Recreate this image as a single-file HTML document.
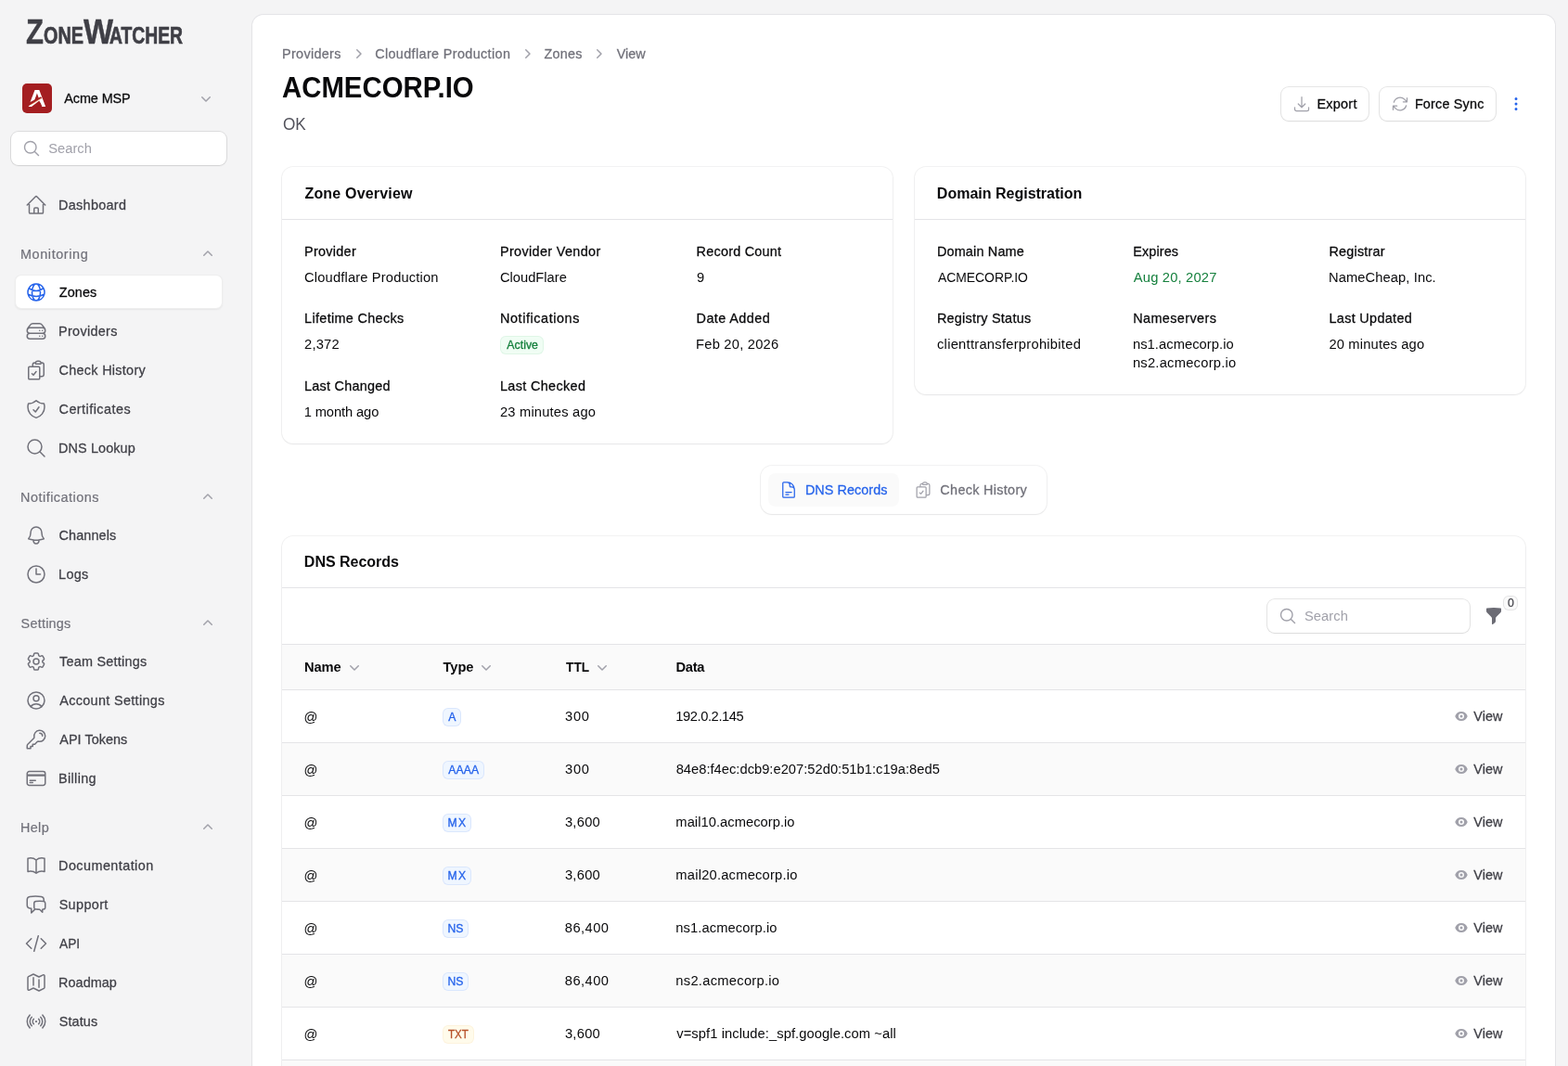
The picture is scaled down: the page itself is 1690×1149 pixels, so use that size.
<!DOCTYPE html>
<html lang="en">
<head>
<meta charset="utf-8">
<title>ACMECORP.IO - ZoneWatcher</title>
<style>
*{box-sizing:border-box;margin:0;padding:0}
html,body{width:1690px;height:1149px;overflow:hidden;background:#f4f4f5}
body{font-family:"Liberation Sans",sans-serif;font-size:14px;color:#09090b;position:relative}
svg{display:block}
.wrap{position:absolute;left:0;top:0;width:1690px;height:1149px;overflow:hidden;will-change:transform}
.t{position:absolute;white-space:nowrap}
.ic{position:absolute;fill:none;stroke-linecap:round;stroke-linejoin:round}
.im{position:absolute}
.sb{position:absolute;left:0;top:0;width:272px;height:1149px}
.logo{position:absolute;left:0;top:0;width:272px;height:60px;font-weight:700;color:#3f3f46}
.logo span{position:absolute;white-space:nowrap;transform-origin:0 0}
.tenant{position:absolute;left:24px;top:90px;width:32px;height:32px;border-radius:5px;background:#a41e21;overflow:hidden}
.ta{position:absolute;left:-.3px;top:2.2px;width:32px;text-align:center;font-weight:700;font-size:25px;line-height:28px;color:#fff;transform:scaleX(1.1)}
.inp{position:absolute;background:#fff;border-radius:8px;box-shadow:0 0 0 1px rgba(9,9,11,.1),0 1px 2px rgba(0,0,0,.05)}
.navon{position:absolute;left:16px;width:224px;height:37px;border-radius:7px;background:#fff;box-shadow:inset 0 0 0 1px rgba(9,9,11,.07),0 1px 2px rgba(0,0,0,.06)}
.main{position:absolute;left:272px;top:16px;width:1404px;height:1160px;background:#fff;border-radius:12px 12px 0 0;box-shadow:0 0 0 1px #e4e4e7}
.btn{position:absolute;background:#fff;border-radius:8px;box-shadow:0 0 0 1px rgba(9,9,11,.1),0 1px 2px rgba(0,0,0,.05)}
.card{position:absolute;background:#fff;border-radius:12px;box-shadow:0 0 0 1px rgba(9,9,11,.05),0 1px 2px rgba(0,0,0,.05)}
.card.tb{overflow:hidden}
.hr{position:absolute;left:0;right:0;height:1px;background:#e4e4e7}
.th{position:absolute;left:0;right:0;background:#fafafa}
.tabs{position:absolute;background:#fff;border-radius:12px;box-shadow:0 0 0 1px rgba(9,9,11,.05),0 1px 2px rgba(0,0,0,.05)}
.tabon{position:absolute;left:8px;top:8px;width:141px;height:36px;border-radius:8px;background:#fafafa}
.bdg{position:absolute;border-radius:6px}
.bdg.g{background:#f0fdf4;box-shadow:inset 0 0 0 1px rgba(22,163,74,.08)}
.bdg.b{background:#eff6ff;box-shadow:inset 0 0 0 1px rgba(37,99,235,.1)}
.bdg.o{background:#fffbeb;box-shadow:inset 0 0 0 1px rgba(217,119,6,.06)}
.bdg.z{background:#fafafa;box-shadow:inset 0 0 0 1px rgba(82,82,91,.12)}
</style>
</head>
<body>
<div class="wrap">
<aside class="sb">
<div class="logo"><span style="left:28.15px;top:14px;font-size:36px;line-height:41px;transform:scaleX(0.863);-webkit-text-stroke:0.4px #3f3f46">Z</span><span style="left:46.76px;top:24px;font-size:25.4px;line-height:28px;transform:scaleX(0.780);-webkit-text-stroke:0.7px #3f3f46">ONE</span><span style="left:89.71px;top:14px;font-size:36px;line-height:41px;transform:scaleX(0.943);-webkit-text-stroke:0.4px #3f3f46">W</span><span style="left:118.19px;top:24px;font-size:25.4px;line-height:28px;transform:scaleX(0.761);-webkit-text-stroke:0.7px #3f3f46">ATCHER</span></div>
<div class="tenant"><span class="ta">A</span><svg viewBox="0 0 32 32" style="position:absolute;left:0;top:0;width:32px;height:32px"><path d="M15.75 13.2 L10 24.8 L21.3 24.8 Z" fill="#a41e21"/><path d="M3 22.8 L20 14.2 L21.2 15.9 L3 26.4 Z" fill="#a41e21"/><path d="M6.8 24.6 L10.6 24.6 L20.7 16.8 L20.1 16.1 Z" fill="#fff"/><path d="M8.5 23.3 L20.2 16.3" stroke="#e9863a" stroke-width=".45" fill="none"/></svg></div>
<div class="t" style="left:69.25px;top:96.10px;font-size:14.399999999999999px;line-height:20px;color:#09090b;letter-spacing:-0.08px;-webkit-text-stroke:0.27px #09090b;">Acme MSP</div>
<svg class="im" style="left:212px;top:96px;width:20px;height:20px;fill:#a1a1aa" viewBox="0 0 20 20"><path fill-rule="evenodd" clip-rule="evenodd" d="M5.22 8.22a.75.75 0 0 1 1.06 0L10 11.94l3.72-3.72a.75.75 0 1 1 1.06 1.06l-4.25 4.25a.75.75 0 0 1-1.06 0L5.22 9.28a.75.75 0 0 1 0-1.06Z"/></svg>
<div class="inp" style="left:12px;top:142px;width:232px;height:36px"></div>
<svg class="ic " style="left:24px;top:150px;width:20px;height:20px;stroke:#a1a1aa;stroke-width:1.7" viewBox="0 0 24 24"><path d="M21 21l-5.197-5.197m0 0A7.5 7.5 0 105.196 5.196a7.5 7.5 0 0010.607 10.607z"/></svg>
<div class="t" style="left:52.25px;top:150.10px;font-size:14.7px;line-height:20px;color:#a1a1aa;letter-spacing:0.02px;">Search</div>
<svg class="ic " style="left:27px;top:209px;width:24px;height:24px;stroke:#71717a;stroke-width:1.5" viewBox="0 0 24 24"><path d="M2.25 12l8.954-8.955c.44-.439 1.152-.439 1.591 0L21.75 12M4.5 9.75v10.125c0 .621.504 1.125 1.125 1.125H9.75v-4.875c0-.621.504-1.125 1.125-1.125h2.25c.621 0 1.125.504 1.125 1.125V21h4.125c.621 0 1.125-.504 1.125-1.125V9.75M8.25 21h8.25"/></svg>
<div class="t" style="left:63.10px;top:211.10px;font-size:14.399999999999999px;line-height:20px;color:#3f3f46;letter-spacing:0.31px;-webkit-text-stroke:0.27px #3f3f46;">Dashboard</div>
<div class="navon" style="top:296px"></div>
<svg class="ic " style="left:27px;top:303px;width:24px;height:24px;stroke:#2563eb;stroke-width:1.5" viewBox="0 0 24 24"><path d="M12 21a9.004 9.004 0 008.716-6.747M12 21a9.004 9.004 0 01-8.716-6.747M12 21c2.485 0 4.5-4.03 4.5-9S14.485 3 12 3m0 18c-2.485 0-4.5-4.03-4.5-9S9.515 3 12 3m0 0a8.997 8.997 0 017.843 4.582M12 3a8.997 8.997 0 00-7.843 4.582m15.686 0A11.953 11.953 0 0112 10.5c-2.998 0-5.74-1.1-7.843-2.918m15.686 0A8.959 8.959 0 0121 12c0 .778-.099 1.533-.284 2.253m0 0A17.919 17.919 0 0112 16.5c-3.162 0-6.133-.815-8.716-2.247m0 0A9.015 9.015 0 013 12c0-1.605.42-3.113 1.157-4.418"/></svg>
<div class="t" style="left:63.85px;top:305.10px;font-size:14.399999999999999px;line-height:20px;color:#09090b;letter-spacing:0.08px;-webkit-text-stroke:0.27px #09090b;">Zones</div>
<svg class="ic " style="left:27px;top:345px;width:24px;height:24px;stroke:#71717a;stroke-width:1.5" viewBox="0 0 24 24"><path d="M5.25 14.25h13.5m-13.5 0a3 3 0 01-3-3m3 3a3 3 0 100 6h13.5a3 3 0 100-6m-16.5-3a3 3 0 013-3h13.5a3 3 0 013 3m-19.5 0a4.5 4.5 0 01.9-2.7L5.737 5.1a3.375 3.375 0 012.7-1.35h7.126c1.062 0 2.062.5 2.7 1.35l2.587 3.45a4.5 4.5 0 01.9 2.7m0 0a3 3 0 01-3 3m0 3h.008v.008h-.008v-.008zm0-6h.008v.008h-.008v-.008zm-3 6h.008v.008h-.008v-.008zm0-6h.008v.008h-.008v-.008z"/></svg>
<div class="t" style="left:63.10px;top:347.10px;font-size:14.399999999999999px;line-height:20px;color:#3f3f46;letter-spacing:0.31px;-webkit-text-stroke:0.27px #3f3f46;">Providers</div>
<svg class="ic " style="left:27px;top:387px;width:24px;height:24px;stroke:#71717a;stroke-width:1.5" viewBox="0 0 24 24"><path d="M11.35 3.836c-.065.21-.1.433-.1.664 0 .414.336.75.75.75h4.5a.75.75 0 00.75-.75 2.25 2.25 0 00-.1-.664m-5.8 0A2.251 2.251 0 0113.5 2.25H15c1.012 0 1.867.668 2.15 1.586m-5.8 0c-.376.023-.75.05-1.124.08C9.095 4.01 8.25 4.973 8.25 6.108V8.25m8.9-4.414c.376.023.75.05 1.124.08 1.131.094 1.976 1.057 1.976 2.192V16.5A2.25 2.25 0 0118 18.75h-2.25m-7.5-10.5H4.875c-.621 0-1.125.504-1.125 1.125v11.25c0 .621.504 1.125 1.125 1.125h9.75c.621 0 1.125-.504 1.125-1.125V18.75m-7.5-10.5h6.375c.621 0 1.125.504 1.125 1.125v9.375m-8.25-3l1.5 1.5 3-3.75"/></svg>
<div class="t" style="left:63.55px;top:389.10px;font-size:14.399999999999999px;line-height:20px;color:#3f3f46;letter-spacing:0.3px;-webkit-text-stroke:0.27px #3f3f46;">Check History</div>
<svg class="ic " style="left:27px;top:429px;width:24px;height:24px;stroke:#71717a;stroke-width:1.5" viewBox="0 0 24 24"><path d="M9 12.75L11.25 15 15 9.75m-3-7.036A11.959 11.959 0 013.598 6 11.99 11.99 0 003 9.749c0 5.592 3.824 10.29 9 11.623 5.176-1.332 9-6.03 9-11.622 0-1.31-.21-2.571-.598-3.751h-.152c-3.196 0-6.1-1.248-8.25-3.285z"/></svg>
<div class="t" style="left:63.55px;top:431.10px;font-size:14.399999999999999px;line-height:20px;color:#3f3f46;letter-spacing:0.46px;-webkit-text-stroke:0.27px #3f3f46;">Certificates</div>
<svg class="ic " style="left:27px;top:471px;width:24px;height:24px;stroke:#71717a;stroke-width:1.5" viewBox="0 0 24 24"><path d="M21 21l-5.197-5.197m0 0A7.5 7.5 0 105.196 5.196a7.5 7.5 0 0010.607 10.607z"/></svg>
<div class="t" style="left:63.10px;top:473.10px;font-size:14.399999999999999px;line-height:20px;color:#3f3f46;letter-spacing:0.11px;-webkit-text-stroke:0.27px #3f3f46;">DNS Lookup</div>
<svg class="ic " style="left:27px;top:565px;width:24px;height:24px;stroke:#71717a;stroke-width:1.5" viewBox="0 0 24 24"><path d="M14.857 17.082a23.848 23.848 0 005.454-1.31A8.967 8.967 0 0118 9.75v-.7V9A6 6 0 006 9v.75a8.967 8.967 0 01-2.312 6.022c1.733.64 3.56 1.085 5.455 1.31m5.714 0a24.255 24.255 0 01-5.714 0m5.714 0a3 3 0 11-5.714 0"/></svg>
<div class="t" style="left:63.55px;top:567.10px;font-size:14.399999999999999px;line-height:20px;color:#3f3f46;letter-spacing:0.12px;-webkit-text-stroke:0.27px #3f3f46;">Channels</div>
<svg class="ic " style="left:27px;top:607px;width:24px;height:24px;stroke:#71717a;stroke-width:1.5" viewBox="0 0 24 24"><path d="M12 6v6h4.5m4.5 0a9 9 0 11-18 0 9 9 0 0118 0z"/></svg>
<div class="t" style="left:63.10px;top:609.10px;font-size:14.399999999999999px;line-height:20px;color:#3f3f46;letter-spacing:0.3px;-webkit-text-stroke:0.27px #3f3f46;">Logs</div>
<svg class="ic " style="left:27px;top:701px;width:24px;height:24px;stroke:#71717a;stroke-width:1.5" viewBox="0 0 24 24"><path d="M9.594 3.94c.09-.542.56-.94 1.11-.94h2.593c.55 0 1.02.398 1.11.94l.213 1.281c.063.374.313.686.645.87.074.04.147.083.22.127.324.196.72.257 1.075.124l1.217-.456a1.125 1.125 0 011.37.49l1.296 2.247a1.125 1.125 0 01-.26 1.431l-1.003.827c-.293.24-.438.613-.431.992a6.759 6.759 0 010 .255c-.007.378.138.75.43.99l1.005.828c.424.35.534.954.26 1.43l-1.298 2.247a1.125 1.125 0 01-1.369.491l-1.217-.456c-.355-.133-.75-.072-1.076.124a6.57 6.57 0 01-.22.128c-.331.183-.581.495-.644.869l-.213 1.28c-.09.543-.56.941-1.11.941h-2.594c-.55 0-1.02-.398-1.11-.94l-.213-1.281c-.062-.374-.312-.686-.644-.87a6.52 6.52 0 01-.22-.127c-.325-.196-.72-.257-1.076-.124l-1.217.456a1.125 1.125 0 01-1.369-.49l-1.297-2.247a1.125 1.125 0 01.26-1.431l1.004-.827c.292-.24.437-.613.43-.992a6.932 6.932 0 010-.255c.007-.378-.138-.75-.43-.99l-1.004-.828a1.125 1.125 0 01-.26-1.43l1.297-2.247a1.125 1.125 0 011.37-.491l1.216.456c.356.133.751.072 1.076-.124.072-.044.146-.087.22-.128.332-.183.582-.495.644-.869l.214-1.281z M15 12a3 3 0 11-6 0 3 3 0 016 0z"/></svg>
<div class="t" style="left:64.00px;top:703.10px;font-size:14.399999999999999px;line-height:20px;color:#3f3f46;letter-spacing:0.26px;-webkit-text-stroke:0.27px #3f3f46;">Team Settings</div>
<svg class="ic " style="left:27px;top:743px;width:24px;height:24px;stroke:#71717a;stroke-width:1.5" viewBox="0 0 24 24"><path d="M17.982 18.725A7.488 7.488 0 0012 15.75a7.488 7.488 0 00-5.982 2.975m11.963 0a9 9 0 10-11.963 0m11.963 0A8.966 8.966 0 0112 21a8.966 8.966 0 01-5.982-2.275M15 9.75a3 3 0 11-6 0 3 3 0 016 0z"/></svg>
<div class="t" style="left:64.25px;top:745.10px;font-size:14.399999999999999px;line-height:20px;color:#3f3f46;letter-spacing:0.34px;-webkit-text-stroke:0.27px #3f3f46;">Account Settings</div>
<svg class="ic " style="left:27px;top:785px;width:24px;height:24px;stroke:#71717a;stroke-width:1.5" viewBox="0 0 24 24"><path d="M15.75 5.25a3 3 0 013 3m3 0a6 6 0 01-7.029 5.912c-.563-.097-1.159.026-1.563.43L10.5 17.25H8.25v2.25H6v2.25H2.25v-2.818c0-.597.237-1.17.659-1.591l6.499-6.499c.404-.404.527-1 .43-1.563A6 6 0 1121.75 8.25z"/></svg>
<div class="t" style="left:64.25px;top:787.10px;font-size:14.399999999999999px;line-height:20px;color:#3f3f46;letter-spacing:0.06px;-webkit-text-stroke:0.27px #3f3f46;">API Tokens</div>
<svg class="ic " style="left:27px;top:827px;width:24px;height:24px;stroke:#71717a;stroke-width:1.5" viewBox="0 0 24 24"><path d="M2.25 8.25h19.5M2.25 9h19.5m-16.5 5.25h6m-6 2.25h3m-3.75 3h15a2.25 2.25 0 002.25-2.25V6.75A2.25 2.25 0 0019.5 4.5h-15a2.25 2.25 0 00-2.25 2.25v10.5A2.25 2.25 0 004.5 19.5z"/></svg>
<div class="t" style="left:63.10px;top:829.10px;font-size:14.399999999999999px;line-height:20px;color:#3f3f46;letter-spacing:0.34px;-webkit-text-stroke:0.27px #3f3f46;">Billing</div>
<svg class="ic " style="left:27px;top:921px;width:24px;height:24px;stroke:#71717a;stroke-width:1.5" viewBox="0 0 24 24"><path d="M12 6.042A8.967 8.967 0 006 3.75c-1.052 0-2.062.18-3 .512v14.25A8.987 8.987 0 016 18c2.305 0 4.408.867 6 2.292m0-14.25a8.966 8.966 0 016-2.292c1.052 0 2.062.18 3 .512v14.25A8.987 8.987 0 0018 18a8.967 8.967 0 00-6 2.292m0-14.25v14.25"/></svg>
<div class="t" style="left:63.10px;top:923.10px;font-size:14.399999999999999px;line-height:20px;color:#3f3f46;letter-spacing:0.44px;-webkit-text-stroke:0.27px #3f3f46;">Documentation</div>
<svg class="ic " style="left:27px;top:963px;width:24px;height:24px;stroke:#71717a;stroke-width:1.5" viewBox="0 0 24 24"><path d="M20.25 8.511c.884.284 1.5 1.128 1.5 2.097v4.286c0 1.136-.847 2.1-1.98 2.193-.34.027-.68.052-1.02.072v3.091l-3-3c-1.354 0-2.694-.055-4.02-.163a2.115 2.115 0 01-.825-.242m9.345-8.334a2.126 2.126 0 00-.476-.095 48.64 48.64 0 00-8.048 0c-1.131.094-1.976 1.057-1.976 2.192v4.286c0 .837.46 1.58 1.155 1.951m9.345-8.334V6.637c0-1.621-1.152-3.026-2.76-3.235A48.455 48.455 0 0011.25 3c-2.115 0-4.198.137-6.24.402-1.608.209-2.76 1.614-2.76 3.235v6.226c0 1.621 1.152 3.026 2.76 3.235.577.075 1.157.14 1.74.194V21l4.155-4.155"/></svg>
<div class="t" style="left:63.65px;top:965.10px;font-size:14.399999999999999px;line-height:20px;color:#3f3f46;letter-spacing:0.38px;-webkit-text-stroke:0.27px #3f3f46;">Support</div>
<svg class="ic " style="left:27px;top:1005px;width:24px;height:24px;stroke:#71717a;stroke-width:1.5" viewBox="0 0 24 24"><path d="M17.25 6.75L22.5 12l-5.25 5.25m-10.5 0L1.5 12l5.25-5.25m7.5-3l-4.5 16.5"/></svg>
<div class="t" style="left:64.25px;top:1007.10px;font-size:14.399999999999999px;line-height:20px;color:#3f3f46;-webkit-text-stroke:0.27px #3f3f46;transform-origin:0 50%;transform:scaleX(0.9542);">API</div>
<svg class="ic " style="left:27px;top:1047px;width:24px;height:24px;stroke:#71717a;stroke-width:1.5" viewBox="0 0 24 24"><path d="M9 6.75V15m6-6v8.25m.503 3.498l4.875-2.437c.381-.19.622-.58.622-1.006V4.82c0-.836-.88-1.38-1.628-1.006l-3.869 1.934c-.317.159-.69.159-1.006 0L9.503 3.252a1.125 1.125 0 00-1.006 0L3.622 5.689C3.24 5.88 3 6.27 3 6.695V19.18c0 .836.88 1.38 1.628 1.006l3.869-1.934c.317-.159.69-.159 1.006 0l4.994 2.497c.317.158.69.158 1.006 0z"/></svg>
<div class="t" style="left:63.10px;top:1049.10px;font-size:14.399999999999999px;line-height:20px;color:#3f3f46;letter-spacing:0.05px;-webkit-text-stroke:0.27px #3f3f46;">Roadmap</div>
<svg class="ic " style="left:27px;top:1089px;width:24px;height:24px;stroke:#71717a;stroke-width:1.5" viewBox="0 0 24 24"><path d="M9.348 14.651a3.75 3.75 0 010-5.303m5.304 0a3.75 3.75 0 010 5.303m-7.425 2.122a6.75 6.75 0 010-9.546m9.546 0a6.75 6.75 0 010 9.546M5.106 18.894c-3.808-3.808-3.808-9.98 0-13.789m13.788 0c3.808 3.808 3.808 9.981 0 13.79M12 12h.008v.007H12V12zm.375 0a.375.375 0 11-.75 0 .375.375 0 01.75 0z"/></svg>
<div class="t" style="left:63.65px;top:1091.10px;font-size:14.399999999999999px;line-height:20px;color:#3f3f46;letter-spacing:0.14px;-webkit-text-stroke:0.27px #3f3f46;">Status</div>
<div class="t" style="left:22.00px;top:264.10px;font-size:14.399999999999999px;line-height:20px;color:#71717a;letter-spacing:0.61px;-webkit-text-stroke:0.2px #71717a;">Monitoring</div>
<svg class="im" style="left:214px;top:264px;width:20px;height:20px;fill:#a1a1aa" viewBox="0 0 20 20"><path fill-rule="evenodd" clip-rule="evenodd" d="M9.47 6.47a.75.75 0 0 1 1.06 0l4.25 4.25a.75.75 0 1 1-1.06 1.06L10 8.06l-3.72 3.72a.75.75 0 0 1-1.06-1.06l4.25-4.25Z"/></svg>
<div class="t" style="left:22.00px;top:526.10px;font-size:14.399999999999999px;line-height:20px;color:#71717a;letter-spacing:0.51px;-webkit-text-stroke:0.2px #71717a;">Notifications</div>
<svg class="im" style="left:214px;top:526px;width:20px;height:20px;fill:#a1a1aa" viewBox="0 0 20 20"><path fill-rule="evenodd" clip-rule="evenodd" d="M9.47 6.47a.75.75 0 0 1 1.06 0l4.25 4.25a.75.75 0 1 1-1.06 1.06L10 8.06l-3.72 3.72a.75.75 0 0 1-1.06-1.06l4.25-4.25Z"/></svg>
<div class="t" style="left:22.55px;top:662.10px;font-size:14.399999999999999px;line-height:20px;color:#71717a;letter-spacing:0.25px;-webkit-text-stroke:0.2px #71717a;">Settings</div>
<svg class="im" style="left:214px;top:662px;width:20px;height:20px;fill:#a1a1aa" viewBox="0 0 20 20"><path fill-rule="evenodd" clip-rule="evenodd" d="M9.47 6.47a.75.75 0 0 1 1.06 0l4.25 4.25a.75.75 0 1 1-1.06 1.06L10 8.06l-3.72 3.72a.75.75 0 0 1-1.06-1.06l4.25-4.25Z"/></svg>
<div class="t" style="left:22.00px;top:882.10px;font-size:14.399999999999999px;line-height:20px;color:#71717a;letter-spacing:0.35px;-webkit-text-stroke:0.2px #71717a;">Help</div>
<svg class="im" style="left:214px;top:882px;width:20px;height:20px;fill:#a1a1aa" viewBox="0 0 20 20"><path fill-rule="evenodd" clip-rule="evenodd" d="M9.47 6.47a.75.75 0 0 1 1.06 0l4.25 4.25a.75.75 0 1 1-1.06 1.06L10 8.06l-3.72 3.72a.75.75 0 0 1-1.06-1.06l4.25-4.25Z"/></svg>
</aside>
<main class="main"></main>
<div class="t" style="left:304.00px;top:47.90px;font-size:14.399999999999999px;line-height:20px;color:#71717a;letter-spacing:0.33px;-webkit-text-stroke:0.27px #71717a;">Providers</div>
<div class="t" style="left:404.15px;top:47.90px;font-size:14.399999999999999px;line-height:20px;color:#71717a;letter-spacing:0.37px;-webkit-text-stroke:0.27px #71717a;">Cloudflare Production</div>
<div class="t" style="left:586.55px;top:47.90px;font-size:14.399999999999999px;line-height:20px;color:#71717a;letter-spacing:0.2px;-webkit-text-stroke:0.27px #71717a;">Zones</div>
<div class="t" style="left:664.75px;top:47.90px;font-size:14.399999999999999px;line-height:20px;color:#71717a;letter-spacing:-0.03px;-webkit-text-stroke:0.27px #71717a;">View</div>
<svg class="im" style="left:376px;top:48px;width:20px;height:20px;fill:#a1a1aa" viewBox="0 0 20 20"><path fill-rule="evenodd" clip-rule="evenodd" d="M8.22 5.22a.75.75 0 0 1 1.06 0l4.25 4.25a.75.75 0 0 1 0 1.06l-4.25 4.25a.75.75 0 0 1-1.06-1.06L11.94 10 8.22 6.28a.75.75 0 0 1 0-1.06Z"/></svg>
<svg class="im" style="left:558px;top:48px;width:20px;height:20px;fill:#a1a1aa" viewBox="0 0 20 20"><path fill-rule="evenodd" clip-rule="evenodd" d="M8.22 5.22a.75.75 0 0 1 1.06 0l4.25 4.25a.75.75 0 0 1 0 1.06l-4.25 4.25a.75.75 0 0 1-1.06-1.06L11.94 10 8.22 6.28a.75.75 0 0 1 0-1.06Z"/></svg>
<svg class="im" style="left:635px;top:48px;width:20px;height:20px;fill:#a1a1aa" viewBox="0 0 20 20"><path fill-rule="evenodd" clip-rule="evenodd" d="M8.22 5.22a.75.75 0 0 1 1.06 0l4.25 4.25a.75.75 0 0 1 0 1.06l-4.25 4.25a.75.75 0 0 1-1.06-1.06L11.94 10 8.22 6.28a.75.75 0 0 1 0-1.06Z"/></svg>
<div class="t" style="left:304.15px;top:76.72px;font-size:31.4px;line-height:36px;color:#09090b;font-weight:700;transform-origin:0 50%;transform:scaleX(0.9353);">ACMECORP.IO</div>
<div class="t" style="left:305.20px;top:121.05px;font-size:18.2px;line-height:26px;color:#52525b;transform-origin:0 50%;transform:scaleX(0.9444);">OK</div>
<div class="btn" style="left:1381px;top:94px;width:94px;height:36px"></div>
<svg class="ic " style="left:1393px;top:102px;width:20px;height:20px;stroke:#a1a1aa;stroke-width:1.5" viewBox="0 0 24 24"><path d="M3 16.5v2.25A2.25 2.25 0 005.25 21h13.5A2.25 2.25 0 0021 18.75V16.5M16.5 12L12 16.5m0 0L7.5 12m4.5 4.5V3"/></svg>
<div class="t" style="left:1419.40px;top:102.10px;font-size:14.399999999999999px;line-height:20px;color:#09090b;letter-spacing:0.29px;-webkit-text-stroke:0.27px #09090b;">Export</div>
<div class="btn" style="left:1487px;top:94px;width:125px;height:36px"></div>
<svg class="ic " style="left:1499px;top:102px;width:20px;height:20px;stroke:#a1a1aa;stroke-width:1.5" viewBox="0 0 24 24"><path d="M16.023 9.348h4.992v-.001M2.985 19.644v-4.992m0 0h4.992m-4.993 0l3.181 3.183a8.25 8.25 0 0013.803-3.7M4.031 9.865a8.25 8.25 0 0113.803-3.7l3.181 3.182m0-4.991v4.99"/></svg>
<div class="t" style="left:1524.90px;top:102.10px;font-size:14.399999999999999px;line-height:20px;color:#09090b;letter-spacing:0.19px;-webkit-text-stroke:0.27px #09090b;">Force Sync</div>
<svg class="im" style="left:1624px;top:102px;width:20px;height:20px;fill:#2563eb" viewBox="0 0 20 20"><path fill-rule="evenodd" clip-rule="evenodd" d="M10 3a1.5 1.5 0 1 1 0 3 1.5 1.5 0 0 1 0-3ZM10 8.5a1.5 1.5 0 1 1 0 3 1.5 1.5 0 0 1 0-3ZM11.5 15.5a1.5 1.5 0 1 0-3 0 1.5 1.5 0 0 0 3 0Z"/></svg>
<div class="card" style="left:304px;top:180px;width:658px;height:298px"><div class="hr" style="top:56px"></div></div>
<div class="t" style="left:328.45px;top:197.02px;font-size:16px;line-height:23px;color:#09090b;letter-spacing:0.19px;font-weight:700;">Zone Overview</div>
<div class="card" style="left:986px;top:180px;width:658px;height:245px"><div class="hr" style="top:56px"></div></div>
<div class="t" style="left:1009.85px;top:197.02px;font-size:16px;line-height:23px;color:#09090b;font-weight:700;">Domain Registration</div>
<div class="t" style="left:328.10px;top:261.10px;font-size:14.399999999999999px;line-height:20px;color:#09090b;letter-spacing:0.29px;-webkit-text-stroke:0.27px #09090b;">Provider</div>
<div class="t" style="left:328.05px;top:289.10px;font-size:14.7px;line-height:20px;color:#09090b;letter-spacing:0.16px;">Cloudflare Production</div>
<div class="t" style="left:539.00px;top:261.10px;font-size:14.399999999999999px;line-height:20px;color:#09090b;letter-spacing:0.36px;-webkit-text-stroke:0.27px #09090b;">Provider Vendor</div>
<div class="t" style="left:538.95px;top:289.10px;font-size:14.7px;line-height:20px;color:#09090b;letter-spacing:0.01px;">CloudFlare</div>
<div class="t" style="left:750.60px;top:261.10px;font-size:14.399999999999999px;line-height:20px;color:#09090b;letter-spacing:0.24px;-webkit-text-stroke:0.27px #09090b;">Record Count</div>
<div class="t" style="left:750.90px;top:289.10px;font-size:14.7px;line-height:20px;color:#09090b;">9</div>
<div class="t" style="left:328.10px;top:333.10px;font-size:14.399999999999999px;line-height:20px;color:#09090b;letter-spacing:0.34px;-webkit-text-stroke:0.27px #09090b;">Lifetime Checks</div>
<div class="t" style="left:328.05px;top:361.10px;font-size:14.7px;line-height:20px;color:#09090b;letter-spacing:0.22px;">2,372</div>
<div class="t" style="left:539.00px;top:333.10px;font-size:14.399999999999999px;line-height:20px;color:#09090b;letter-spacing:0.58px;-webkit-text-stroke:0.27px #09090b;">Notifications</div>
<div class="bdg g" style="left:539px;top:362px;width:47px;height:20px"></div>
<div class="t" style="left:546.35px;top:364.17px;font-size:12.3px;line-height:17px;color:#15803d;letter-spacing:0.01px;-webkit-text-stroke:0.3px #15803d;">Active</div>
<div class="t" style="left:750.60px;top:333.10px;font-size:14.399999999999999px;line-height:20px;color:#09090b;letter-spacing:0.43px;-webkit-text-stroke:0.27px #09090b;">Date Added</div>
<div class="t" style="left:750.10px;top:361.10px;font-size:14.7px;line-height:20px;color:#09090b;letter-spacing:0.22px;">Feb 20, 2026</div>
<div class="t" style="left:328.10px;top:406.10px;font-size:14.399999999999999px;line-height:20px;color:#09090b;letter-spacing:0.25px;-webkit-text-stroke:0.27px #09090b;">Last Changed</div>
<div class="t" style="left:327.70px;top:434.10px;font-size:14.7px;line-height:20px;color:#09090b;letter-spacing:-0.1px;">1 month ago</div>
<div class="t" style="left:539.00px;top:406.10px;font-size:14.399999999999999px;line-height:20px;color:#09090b;letter-spacing:0.36px;-webkit-text-stroke:0.27px #09090b;">Last Checked</div>
<div class="t" style="left:538.95px;top:434.10px;font-size:14.7px;line-height:20px;color:#09090b;letter-spacing:0.2px;">23 minutes ago</div>
<div class="t" style="left:1009.90px;top:261.10px;font-size:14.399999999999999px;line-height:20px;color:#09090b;letter-spacing:0.19px;-webkit-text-stroke:0.27px #09090b;">Domain Name</div>
<div class="t" style="left:1010.55px;top:289.10px;font-size:14.7px;line-height:20px;color:#09090b;transform-origin:0 50%;transform:scaleX(0.9450);">ACMECORP.IO</div>
<div class="t" style="left:1221.20px;top:261.10px;font-size:14.399999999999999px;line-height:20px;color:#09090b;letter-spacing:0.14px;-webkit-text-stroke:0.27px #09090b;">Expires</div>
<div class="t" style="left:1221.85px;top:289.10px;font-size:14.7px;line-height:20px;color:#15803d;letter-spacing:0.19px;">Aug 20, 2027</div>
<div class="t" style="left:1432.50px;top:261.10px;font-size:14.399999999999999px;line-height:20px;color:#09090b;letter-spacing:0.2px;-webkit-text-stroke:0.27px #09090b;">Registrar</div>
<div class="t" style="left:1432.00px;top:289.10px;font-size:14.7px;line-height:20px;color:#09090b;letter-spacing:0.1px;">NameCheap, Inc.</div>
<div class="t" style="left:1009.90px;top:333.10px;font-size:14.399999999999999px;line-height:20px;color:#09090b;letter-spacing:0.26px;-webkit-text-stroke:0.27px #09090b;">Registry Status</div>
<div class="t" style="left:1010.00px;top:361.10px;font-size:14.7px;line-height:20px;color:#09090b;letter-spacing:0.27px;">clienttransferprohibited</div>
<div class="t" style="left:1221.20px;top:333.10px;font-size:14.399999999999999px;line-height:20px;color:#09090b;letter-spacing:0.41px;-webkit-text-stroke:0.27px #09090b;">Nameservers</div>
<div class="t" style="left:1220.95px;top:361.10px;font-size:14.7px;line-height:20px;color:#09090b;letter-spacing:0.07px;">ns1.acmecorp.io</div>
<div class="t" style="left:1220.95px;top:381.10px;font-size:14.7px;line-height:20px;color:#09090b;letter-spacing:0.25px;">ns2.acmecorp.io</div>
<div class="t" style="left:1432.50px;top:333.10px;font-size:14.399999999999999px;line-height:20px;color:#09090b;letter-spacing:0.33px;-webkit-text-stroke:0.27px #09090b;">Last Updated</div>
<div class="t" style="left:1432.45px;top:361.10px;font-size:14.7px;line-height:20px;color:#09090b;letter-spacing:0.17px;">20 minutes ago</div>
<div class="tabs" style="left:820px;top:502px;width:308px;height:52px"><div class="tabon"></div></div>
<svg class="ic " style="left:840px;top:518px;width:20px;height:20px;stroke:#2563eb;stroke-width:1.5" viewBox="0 0 24 24"><path d="M19.5 14.25v-2.625a3.375 3.375 0 00-3.375-3.375h-1.5A1.125 1.125 0 0113.5 7.125v-1.5a3.375 3.375 0 00-3.375-3.375H8.25m0 12.75h7.5m-7.5 3H12M10.5 2.25H5.625c-.621 0-1.125.504-1.125 1.125v17.25c0 .621.504 1.125 1.125 1.125h12.75c.621 0 1.125-.504 1.125-1.125V11.25a9 9 0 00-9-9z"/></svg>
<div class="t" style="left:867.90px;top:518.10px;font-size:14.399999999999999px;line-height:20px;color:#2563eb;letter-spacing:0.06px;-webkit-text-stroke:0.27px #2563eb;">DNS Records</div>
<svg class="ic " style="left:985px;top:518px;width:20px;height:20px;stroke:#a1a1aa;stroke-width:1.5" viewBox="0 0 24 24"><path d="M11.35 3.836c-.065.21-.1.433-.1.664 0 .414.336.75.75.75h4.5a.75.75 0 00.75-.75 2.25 2.25 0 00-.1-.664m-5.8 0A2.251 2.251 0 0113.5 2.25H15c1.012 0 1.867.668 2.15 1.586m-5.8 0c-.376.023-.75.05-1.124.08C9.095 4.01 8.25 4.973 8.25 6.108V8.25m8.9-4.414c.376.023.75.05 1.124.08 1.131.094 1.976 1.057 1.976 2.192V16.5A2.25 2.25 0 0118 18.75h-2.25m-7.5-10.5H4.875c-.621 0-1.125.504-1.125 1.125v11.25c0 .621.504 1.125 1.125 1.125h9.75c.621 0 1.125-.504 1.125-1.125V18.75m-7.5-10.5h6.375c.621 0 1.125.504 1.125 1.125v9.375m-8.25-3l1.5 1.5 3-3.75"/></svg>
<div class="t" style="left:1013.35px;top:518.10px;font-size:14.399999999999999px;line-height:20px;color:#71717a;letter-spacing:0.32px;-webkit-text-stroke:0.27px #71717a;">Check History</div>
<div class="card tb" style="left:304px;top:578px;width:1340px;height:620px">
<div class="hr" style="top:55px"></div><div class="hr" style="top:116px"></div>
<div class="th" style="top:117px;height:48px"></div><div class="hr" style="top:165px"></div>
<div class="hr" style="top:222px"></div>
<div class="th" style="top:223px;height:56px"></div>
<div class="hr" style="top:279px"></div>
<div class="hr" style="top:336px"></div>
<div class="th" style="top:337px;height:56px"></div>
<div class="hr" style="top:393px"></div>
<div class="hr" style="top:450px"></div>
<div class="th" style="top:451px;height:56px"></div>
<div class="hr" style="top:507px"></div>
<div class="hr" style="top:564px"></div>
<div class="th" style="top:565px;height:56px"></div>
<div class="hr" style="top:621px"></div>
</div>
<div class="t" style="left:327.85px;top:593.92px;font-size:16px;line-height:23px;color:#09090b;letter-spacing:-0.01px;font-weight:700;">DNS Records</div>
<div class="inp" style="left:1366px;top:646px;width:218px;height:36px"></div>
<svg class="ic " style="left:1378px;top:654px;width:20px;height:20px;stroke:#a1a1aa;stroke-width:1.7" viewBox="0 0 24 24"><path d="M21 21l-5.197-5.197m0 0A7.5 7.5 0 105.196 5.196a7.5 7.5 0 0010.607 10.607z"/></svg>
<div class="t" style="left:1405.95px;top:654.10px;font-size:14.7px;line-height:20px;color:#a1a1aa;letter-spacing:0.08px;">Search</div>
<svg class="im" style="left:1600px;top:654px;width:20px;height:20px;fill:#6b6b74" viewBox="0 0 20 20"><path fill-rule="evenodd" clip-rule="evenodd" d="M2.628 1.601C5.028 1.206 7.49 1 10 1s4.973.206 7.372.601a.75.75 0 0 1 .628.74v2.288a2.25 2.25 0 0 1-.659 1.59l-4.682 4.683a2.25 2.25 0 0 0-.659 1.59v3.037c0 .684-.31 1.33-.844 1.757l-1.937 1.55A.75.75 0 0 1 8 18.25v-5.757a2.25 2.25 0 0 0-.659-1.591L2.659 6.22A2.25 2.25 0 0 1 2 4.629V2.34a.75.75 0 0 1 .628-.74Z"/></svg>
<div class="bdg z" style="left:1620px;top:642px;width:16px;height:16px"></div>
<div class="t" style="left:1624.90px;top:641.87px;font-size:12.299999999999999px;line-height:17px;color:#3f3f46;-webkit-text-stroke:0.2px #3f3f46;">0</div>
<div class="t" style="left:327.90px;top:709.10px;font-size:14.7px;line-height:20px;color:#09090b;letter-spacing:-0.08px;font-weight:700;">Name</div>
<svg class="im" style="left:372px;top:709px;width:20px;height:20px;fill:#a1a1aa" viewBox="0 0 20 20"><path fill-rule="evenodd" clip-rule="evenodd" d="M5.22 8.22a.75.75 0 0 1 1.06 0L10 11.94l3.72-3.72a.75.75 0 1 1 1.06 1.06l-4.25 4.25a.75.75 0 0 1-1.06 0L5.22 9.28a.75.75 0 0 1 0-1.06Z"/></svg>
<div class="t" style="left:477.55px;top:709.10px;font-size:14.7px;line-height:20px;color:#09090b;letter-spacing:-0.1px;font-weight:700;">Type</div>
<svg class="im" style="left:514px;top:709px;width:20px;height:20px;fill:#a1a1aa" viewBox="0 0 20 20"><path fill-rule="evenodd" clip-rule="evenodd" d="M5.22 8.22a.75.75 0 0 1 1.06 0L10 11.94l3.72-3.72a.75.75 0 1 1 1.06 1.06l-4.25 4.25a.75.75 0 0 1-1.06 0L5.22 9.28a.75.75 0 0 1 0-1.06Z"/></svg>
<div class="t" style="left:609.56px;top:709.10px;font-size:14.7px;line-height:20px;color:#09090b;font-weight:700;transform-origin:0 50%;transform:scaleX(0.9336);">TTL</div>
<svg class="im" style="left:639px;top:709px;width:20px;height:20px;fill:#a1a1aa" viewBox="0 0 20 20"><path fill-rule="evenodd" clip-rule="evenodd" d="M5.22 8.22a.75.75 0 0 1 1.06 0L10 11.94l3.72-3.72a.75.75 0 1 1 1.06 1.06l-4.25 4.25a.75.75 0 0 1-1.06 0L5.22 9.28a.75.75 0 0 1 0-1.06Z"/></svg>
<div class="t" style="left:728.50px;top:709.10px;font-size:14.7px;line-height:20px;color:#09090b;letter-spacing:-0.32px;font-weight:700;">Data</div>
<div class="t" style="left:327.55px;top:762.90px;font-size:14.7px;line-height:20px;color:#09090b;">@</div>
<div class="bdg b" style="left:477px;top:763px;width:20px;height:20px"></div>
<div class="t" style="left:483.35px;top:764.77px;font-size:12.2px;line-height:17px;color:#2563eb;-webkit-text-stroke:0.3px #2563eb;">A</div>
<div class="t" style="left:608.95px;top:762.10px;font-size:14.7px;line-height:20px;color:#09090b;letter-spacing:0.8px;">300</div>
<div class="t" style="left:728.20px;top:762.10px;font-size:14.7px;line-height:20px;color:#09090b;letter-spacing:-0.4px;">192.0.2.145</div>
<svg class="im" style="left:1567px;top:764px;width:16px;height:16px;fill:#a1a1aa" viewBox="0 0 16 16"><path fill-rule="evenodd" clip-rule="evenodd" d="M8 9.5a1.5 1.5 0 1 0 0-3 1.5 1.5 0 0 0 0 3Z M1.38 8.28a.87.87 0 0 1 0-.566 7.003 7.003 0 0 1 13.238.006.87.87 0 0 1 0 .566A7.003 7.003 0 0 1 1.379 8.28ZM11 8a3 3 0 1 1-6 0 3 3 0 0 1 6 0Z"/></svg>
<div class="t" style="left:1588.35px;top:762.10px;font-size:14.399999999999999px;line-height:20px;color:#3f3f46;letter-spacing:0.07px;-webkit-text-stroke:0.27px #3f3f46;">View</div>
<div class="t" style="left:327.55px;top:819.90px;font-size:14.7px;line-height:20px;color:#09090b;">@</div>
<div class="bdg b" style="left:477px;top:820px;width:45px;height:20px"></div>
<div class="t" style="left:483.35px;top:821.77px;font-size:12.2px;line-height:17px;color:#2563eb;letter-spacing:0.07px;-webkit-text-stroke:0.3px #2563eb;">AAAA</div>
<div class="t" style="left:608.95px;top:819.10px;font-size:14.7px;line-height:20px;color:#09090b;letter-spacing:0.8px;">300</div>
<div class="t" style="left:728.65px;top:819.10px;font-size:14.7px;line-height:20px;color:#09090b;letter-spacing:0.02px;">84e8:f4ec:dcb9:e207:52d0:51b1:c19a:8ed5</div>
<svg class="im" style="left:1567px;top:821px;width:16px;height:16px;fill:#a1a1aa" viewBox="0 0 16 16"><path fill-rule="evenodd" clip-rule="evenodd" d="M8 9.5a1.5 1.5 0 1 0 0-3 1.5 1.5 0 0 0 0 3Z M1.38 8.28a.87.87 0 0 1 0-.566 7.003 7.003 0 0 1 13.238.006.87.87 0 0 1 0 .566A7.003 7.003 0 0 1 1.379 8.28ZM11 8a3 3 0 1 1-6 0 3 3 0 0 1 6 0Z"/></svg>
<div class="t" style="left:1588.35px;top:819.10px;font-size:14.399999999999999px;line-height:20px;color:#3f3f46;letter-spacing:0.07px;-webkit-text-stroke:0.27px #3f3f46;">View</div>
<div class="t" style="left:327.55px;top:876.90px;font-size:14.7px;line-height:20px;color:#09090b;">@</div>
<div class="bdg b" style="left:477px;top:877px;width:31px;height:20px"></div>
<div class="t" style="left:482.40px;top:878.77px;font-size:12.2px;line-height:17px;color:#2563eb;letter-spacing:1.35px;-webkit-text-stroke:0.3px #2563eb;">MX</div>
<div class="t" style="left:608.95px;top:876.10px;font-size:14.7px;line-height:20px;color:#09090b;letter-spacing:0.26px;">3,600</div>
<div class="t" style="left:728.35px;top:876.10px;font-size:14.7px;line-height:20px;color:#09090b;letter-spacing:0.05px;">mail10.acmecorp.io</div>
<svg class="im" style="left:1567px;top:878px;width:16px;height:16px;fill:#a1a1aa" viewBox="0 0 16 16"><path fill-rule="evenodd" clip-rule="evenodd" d="M8 9.5a1.5 1.5 0 1 0 0-3 1.5 1.5 0 0 0 0 3Z M1.38 8.28a.87.87 0 0 1 0-.566 7.003 7.003 0 0 1 13.238.006.87.87 0 0 1 0 .566A7.003 7.003 0 0 1 1.379 8.28ZM11 8a3 3 0 1 1-6 0 3 3 0 0 1 6 0Z"/></svg>
<div class="t" style="left:1588.35px;top:876.10px;font-size:14.399999999999999px;line-height:20px;color:#3f3f46;letter-spacing:0.07px;-webkit-text-stroke:0.27px #3f3f46;">View</div>
<div class="t" style="left:327.55px;top:933.90px;font-size:14.7px;line-height:20px;color:#09090b;">@</div>
<div class="bdg b" style="left:477px;top:934px;width:31px;height:20px"></div>
<div class="t" style="left:482.40px;top:935.77px;font-size:12.2px;line-height:17px;color:#2563eb;letter-spacing:1.35px;-webkit-text-stroke:0.3px #2563eb;">MX</div>
<div class="t" style="left:608.95px;top:933.10px;font-size:14.7px;line-height:20px;color:#09090b;letter-spacing:0.26px;">3,600</div>
<div class="t" style="left:728.35px;top:933.10px;font-size:14.7px;line-height:20px;color:#09090b;letter-spacing:0.22px;">mail20.acmecorp.io</div>
<svg class="im" style="left:1567px;top:935px;width:16px;height:16px;fill:#a1a1aa" viewBox="0 0 16 16"><path fill-rule="evenodd" clip-rule="evenodd" d="M8 9.5a1.5 1.5 0 1 0 0-3 1.5 1.5 0 0 0 0 3Z M1.38 8.28a.87.87 0 0 1 0-.566 7.003 7.003 0 0 1 13.238.006.87.87 0 0 1 0 .566A7.003 7.003 0 0 1 1.379 8.28ZM11 8a3 3 0 1 1-6 0 3 3 0 0 1 6 0Z"/></svg>
<div class="t" style="left:1588.35px;top:933.10px;font-size:14.399999999999999px;line-height:20px;color:#3f3f46;letter-spacing:0.07px;-webkit-text-stroke:0.27px #3f3f46;">View</div>
<div class="t" style="left:327.55px;top:990.90px;font-size:14.7px;line-height:20px;color:#09090b;">@</div>
<div class="bdg b" style="left:477px;top:991px;width:28px;height:20px"></div>
<div class="t" style="left:482.40px;top:992.77px;font-size:12.2px;line-height:17px;color:#2563eb;letter-spacing:-0.05px;-webkit-text-stroke:0.3px #2563eb;">NS</div>
<div class="t" style="left:608.85px;top:990.10px;font-size:14.7px;line-height:20px;color:#09090b;letter-spacing:0.43px;">86,400</div>
<div class="t" style="left:728.35px;top:990.10px;font-size:14.7px;line-height:20px;color:#09090b;letter-spacing:0.1px;">ns1.acmecorp.io</div>
<svg class="im" style="left:1567px;top:992px;width:16px;height:16px;fill:#a1a1aa" viewBox="0 0 16 16"><path fill-rule="evenodd" clip-rule="evenodd" d="M8 9.5a1.5 1.5 0 1 0 0-3 1.5 1.5 0 0 0 0 3Z M1.38 8.28a.87.87 0 0 1 0-.566 7.003 7.003 0 0 1 13.238.006.87.87 0 0 1 0 .566A7.003 7.003 0 0 1 1.379 8.28ZM11 8a3 3 0 1 1-6 0 3 3 0 0 1 6 0Z"/></svg>
<div class="t" style="left:1588.35px;top:990.10px;font-size:14.399999999999999px;line-height:20px;color:#3f3f46;letter-spacing:0.07px;-webkit-text-stroke:0.27px #3f3f46;">View</div>
<div class="t" style="left:327.55px;top:1047.90px;font-size:14.7px;line-height:20px;color:#09090b;">@</div>
<div class="bdg b" style="left:477px;top:1048px;width:28px;height:20px"></div>
<div class="t" style="left:482.40px;top:1049.77px;font-size:12.2px;line-height:17px;color:#2563eb;letter-spacing:-0.05px;-webkit-text-stroke:0.3px #2563eb;">NS</div>
<div class="t" style="left:608.85px;top:1047.10px;font-size:14.7px;line-height:20px;color:#09090b;letter-spacing:0.43px;">86,400</div>
<div class="t" style="left:728.35px;top:1047.10px;font-size:14.7px;line-height:20px;color:#09090b;letter-spacing:0.28px;">ns2.acmecorp.io</div>
<svg class="im" style="left:1567px;top:1049px;width:16px;height:16px;fill:#a1a1aa" viewBox="0 0 16 16"><path fill-rule="evenodd" clip-rule="evenodd" d="M8 9.5a1.5 1.5 0 1 0 0-3 1.5 1.5 0 0 0 0 3Z M1.38 8.28a.87.87 0 0 1 0-.566 7.003 7.003 0 0 1 13.238.006.87.87 0 0 1 0 .566A7.003 7.003 0 0 1 1.379 8.28ZM11 8a3 3 0 1 1-6 0 3 3 0 0 1 6 0Z"/></svg>
<div class="t" style="left:1588.35px;top:1047.10px;font-size:14.399999999999999px;line-height:20px;color:#3f3f46;letter-spacing:0.07px;-webkit-text-stroke:0.27px #3f3f46;">View</div>
<div class="t" style="left:327.55px;top:1104.90px;font-size:14.7px;line-height:20px;color:#09090b;">@</div>
<div class="bdg o" style="left:477px;top:1105px;width:34px;height:20px"></div>
<div class="t" style="left:483.16px;top:1106.77px;font-size:12.2px;line-height:17px;color:#b7512a;-webkit-text-stroke:0.3px #b7512a;transform-origin:0 50%;transform:scaleX(0.9512);">TXT</div>
<div class="t" style="left:608.95px;top:1104.10px;font-size:14.7px;line-height:20px;color:#09090b;letter-spacing:0.26px;">3,600</div>
<div class="t" style="left:729.25px;top:1104.10px;font-size:14.7px;line-height:20px;color:#09090b;letter-spacing:0.09px;">v=spf1 include:_spf.google.com ~all</div>
<svg class="im" style="left:1567px;top:1106px;width:16px;height:16px;fill:#a1a1aa" viewBox="0 0 16 16"><path fill-rule="evenodd" clip-rule="evenodd" d="M8 9.5a1.5 1.5 0 1 0 0-3 1.5 1.5 0 0 0 0 3Z M1.38 8.28a.87.87 0 0 1 0-.566 7.003 7.003 0 0 1 13.238.006.87.87 0 0 1 0 .566A7.003 7.003 0 0 1 1.379 8.28ZM11 8a3 3 0 1 1-6 0 3 3 0 0 1 6 0Z"/></svg>
<div class="t" style="left:1588.35px;top:1104.10px;font-size:14.399999999999999px;line-height:20px;color:#3f3f46;letter-spacing:0.07px;-webkit-text-stroke:0.27px #3f3f46;">View</div>
<div class="t" style="left:327.55px;top:1161.90px;font-size:14.7px;line-height:20px;color:#09090b;">@</div>
<div class="bdg b" style="left:477px;top:1162px;width:59px;height:20px"></div>
<div class="t" style="left:482.80px;top:1163.77px;font-size:12.2px;line-height:17px;color:#2563eb;letter-spacing:0.89px;-webkit-text-stroke:0.3px #2563eb;">CNAME</div>
<div class="t" style="left:608.95px;top:1161.10px;font-size:14.7px;line-height:20px;color:#09090b;letter-spacing:0.26px;">3,600</div>
<div class="t" style="left:728.70px;top:1161.10px;font-size:14.7px;line-height:20px;color:#09090b;letter-spacing:-0.31px;">acmecorp.io</div>
<svg class="im" style="left:1567px;top:1163px;width:16px;height:16px;fill:#a1a1aa" viewBox="0 0 16 16"><path fill-rule="evenodd" clip-rule="evenodd" d="M8 9.5a1.5 1.5 0 1 0 0-3 1.5 1.5 0 0 0 0 3Z M1.38 8.28a.87.87 0 0 1 0-.566 7.003 7.003 0 0 1 13.238.006.87.87 0 0 1 0 .566A7.003 7.003 0 0 1 1.379 8.28ZM11 8a3 3 0 1 1-6 0 3 3 0 0 1 6 0Z"/></svg>
<div class="t" style="left:1588.35px;top:1161.10px;font-size:14.399999999999999px;line-height:20px;color:#3f3f46;letter-spacing:0.07px;-webkit-text-stroke:0.27px #3f3f46;">View</div>
</div>
</body>
</html>
